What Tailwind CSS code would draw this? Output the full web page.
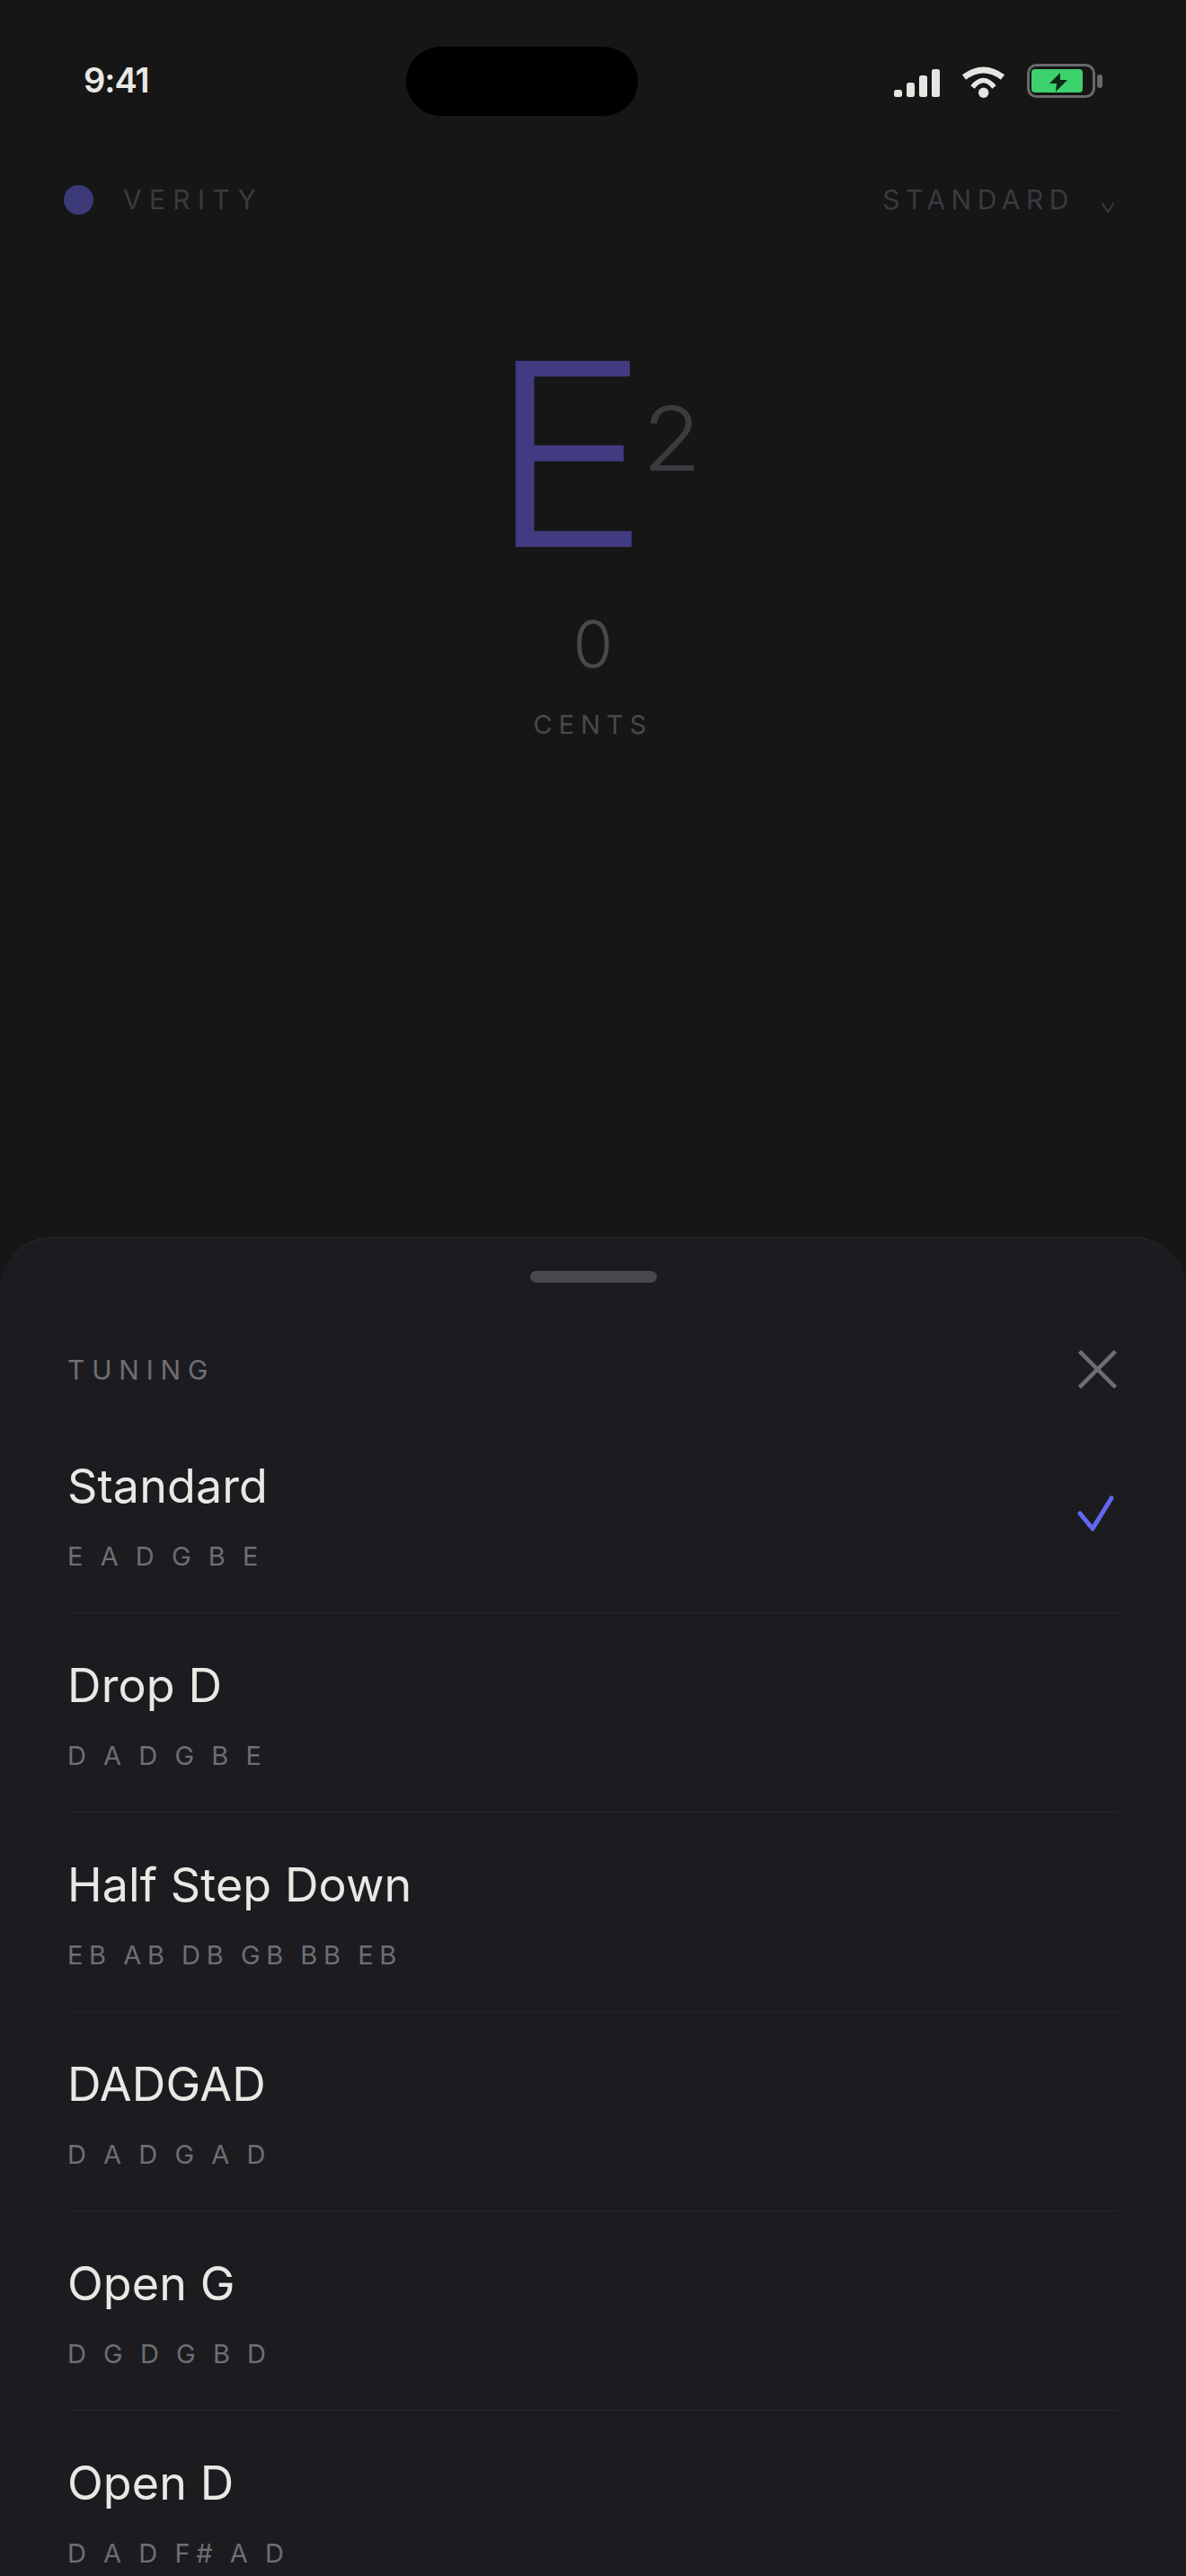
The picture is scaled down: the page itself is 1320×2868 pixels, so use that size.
<!DOCTYPE html>
<html>
<head>
<meta charset="utf-8">
<script src="https://cdn.jsdelivr.net/npm/@tailwindcss/browser@4"></script>
</head>
<body class="m-0 bg-[#161616]">
<div class="relative w-[1320px] h-[2868px] overflow-hidden bg-[#161616] font-['Inter',sans-serif]">

  <!-- status bar -->
  <div class="relative h-[200px] pt-[70px] pl-[93px]">
    <div class="text-[38px] leading-[38px] font-semibold tracking-[-1px] text-[#e8e8e4]">9:41</div>
    <div class="absolute left-[452px] top-[52px] w-[258px] h-[77px] bg-black rounded-full"></div>
    <svg class="absolute left-[990px] top-[70px]" width="240" height="42" viewBox="990 70 240 42">
      <g fill="#e5e5e1">
        <rect x="995" y="100" width="9" height="8" rx="2.5"/>
        <rect x="1009" y="92" width="9" height="16" rx="2.5"/>
        <rect x="1023" y="84" width="9" height="24" rx="2.5"/>
        <rect x="1037" y="77" width="9" height="31" rx="2.5"/>
        <circle cx="1094.7" cy="103.3" r="5.7"/>
      </g>
      <path d="M1073 86 Q1094.5 70 1116 86" fill="none" stroke="#e5e5e1" stroke-width="7"/>
      <path d="M1082.5 97 Q1094.5 82 1106.5 97" fill="none" stroke="#e5e5e1" stroke-width="5.5"/>
      <rect x="1144.5" y="72.5" width="73" height="35" rx="9" fill="none" stroke="#69696d" stroke-width="3"/>
      <rect x="1221" y="83" width="6" height="15" rx="3" fill="#69696d"/>
      <rect x="1148" y="77" width="57" height="26" rx="4" fill="#3dd26d"/>
      <path d="M1180 81 L1168 93 L1176 93 L1175 102 L1188 89 L1180 89 Z" fill="#0f2a18"/>
    </svg>
  </div>

  <!-- header -->
  <div class="flex h-[44px] items-center justify-between pl-[71px] pr-[79px]">
    <div class="flex items-center gap-[33px]">
      <span class="h-[33px] w-[33px] rounded-full bg-[#3d3a78]"></span>
      <span class="text-[30px] leading-[30px] tracking-[8.3px] text-[#3a3a40]">VERITY</span>
    </div>
    <div class="flex items-center gap-[29px]">
      <span class="text-[30px] leading-[30px] tracking-[6.5px] text-[#3a3a40]">STANDARD</span>
      <svg class="mt-[18px]" width="16" height="12" viewBox="0 0 16 12"><path d="M1.5 1 L8 11 L14.5 1" fill="none" stroke="#3a3a40" stroke-width="2"/></svg>
    </div>
  </div>

  <!-- note -->
  <div class="mt-[119px] flex items-start pl-[545px]">
    <span class="origin-left scale-x-[1.05] text-[285px] leading-[285px] font-light tracking-[-2px] text-[#413c82]">E</span>
    <span class="ml-[2px] mt-[76px] origin-left scale-x-[1.08] text-[99px] leading-[99px] font-light text-[#3a3a3f]">2</span>
  </div>
  <div class="mt-[33px] text-center text-[72px] leading-[72px] font-light text-[#48484e]">0</div>
  <div class="mt-[39px] text-center text-[29px] leading-[29px] tracking-[7px] text-[#48484e]">CENTS</div>

  <!-- sheet -->
  <div class="absolute inset-x-0 top-[1377px] bottom-0 rounded-t-[60px] border-t border-[#2a2a30] bg-[#1c1c20] px-[75px]">
    <div class="mx-auto mt-[37px] h-[13px] w-[141px] rounded-full bg-[#48484e]"></div>
    <div class="mt-[75px] flex h-[43px] items-center justify-between">
      <span class="text-[30px] leading-[30px] tracking-[7.8px] text-[#6e6e73]">TUNING</span>
      <svg class="mr-[2px]" width="43" height="43" viewBox="0 0 43 43"><path d="M1.5 1.5 L41.5 41.5 M41.5 1.5 L1.5 41.5" stroke="#6e6e73" stroke-width="4.5"/></svg>
    </div>

    <div class="mt-[28px]">
      <div class="relative h-[222px] border-b border-[#26262b] pt-[55px]">
        <div class="text-[52px] leading-[52px] font-normal tracking-[0.1px] text-[#e8e8e4]">Standard</div>
        <div class="mt-[37px] text-[29px] leading-[29px] tracking-[6.67px] [word-spacing:-2.3px] whitespace-pre text-[#6e6e73]">E A D G B E</div>
        <svg class="absolute right-[4px] top-[91px]" width="42" height="42" viewBox="0 0 42 42"><path d="M3 20 L17 37 L38 3" fill="none" stroke="#6366f1" stroke-width="5" stroke-linecap="round" stroke-linejoin="round"/></svg>
      </div>
      <div class="h-[222px] border-b border-[#26262b] pt-[55px]">
        <div class="text-[52px] leading-[52px] font-normal tracking-[0.1px] text-[#e8e8e4]">Drop D</div>
        <div class="mt-[37px] text-[29px] leading-[29px] tracking-[6.67px] [word-spacing:-2.3px] whitespace-pre text-[#6e6e73]">D A D G B E</div>
      </div>
      <div class="h-[222px] border-b border-[#26262b] pt-[55px]">
        <div class="text-[52px] leading-[52px] font-normal tracking-[0.1px] text-[#e8e8e4]">Half Step Down</div>
        <div class="mt-[37px] text-[29px] leading-[29px] tracking-[6.67px] [word-spacing:-2.3px] whitespace-pre text-[#6e6e73]">EB AB DB GB BB EB</div>
      </div>
      <div class="h-[222px] border-b border-[#26262b] pt-[55px]">
        <div class="text-[52px] leading-[52px] font-normal tracking-[0.1px] text-[#e8e8e4]">DADGAD</div>
        <div class="mt-[37px] text-[29px] leading-[29px] tracking-[6.67px] [word-spacing:-2.3px] whitespace-pre text-[#6e6e73]">D A D G A D</div>
      </div>
      <div class="h-[222px] border-b border-[#26262b] pt-[55px]">
        <div class="text-[52px] leading-[52px] font-normal tracking-[0.1px] text-[#e8e8e4]">Open G</div>
        <div class="mt-[37px] text-[29px] leading-[29px] tracking-[6.67px] [word-spacing:-2.3px] whitespace-pre text-[#6e6e73]">D G D G B D</div>
      </div>
      <div class="h-[222px] pt-[55px]">
        <div class="text-[52px] leading-[52px] font-normal tracking-[0.1px] text-[#e8e8e4]">Open D</div>
        <div class="mt-[37px] text-[29px] leading-[29px] tracking-[6.67px] [word-spacing:-2.3px] whitespace-pre text-[#6e6e73]">D A D F# A D</div>
      </div>
    </div>
  </div>
</div>
</body>
</html>
